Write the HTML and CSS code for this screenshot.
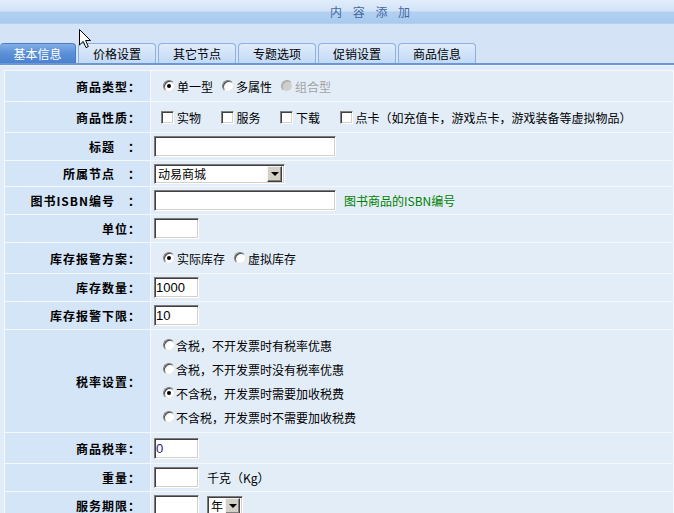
FILE: index.html
```html
<!DOCTYPE html>
<html>

<head>
	<title>内容添加</title>
	<link rel="stylesheet" href="styles.css">
</head>

<body>
	<div class="topbar">内 容 添 加</div>

	<div class="tabbar">
		<div class="tab active">基本信息</div>
		<div class="tab">价格设置</div>
		<div class="tab">其它节点</div>
		<div class="tab">专题选项</div>
		<div class="tab">促销设置</div>
		<div class="tab">商品信息</div>
	</div>

	<div class="content">
		<table class="form-table">
			<tr class="tall">
				<td class="label">商品类型：</td>
				<td class="value">
					<div class="field options">
						<span class="opt"><span class="radio checked"></span>单一型</span>
						<span class="opt"><span class="radio"></span>多属性</span>
						<span class="opt disabled"><span class="radio"></span>组合型</span>
					</div>
				</td>
			</tr>
			<tr class="tall">
				<td class="label">商品性质：</td>
				<td class="value">
					<div class="field checks">
						<span class="opt"><span class="checkbox"></span>实物</span>
						<span class="opt"><span class="checkbox"></span>服务</span>
						<span class="opt"><span class="checkbox"></span>下载</span>
						<span class="opt"><span class="checkbox"></span>点卡（如充值卡，游戏点卡，游戏装备等虚拟物品）</span>
					</div>
				</td>
			</tr>
			<tr class="field-row">
				<td class="label">标题　：</td>
				<td class="value">
					<div class="field"><input class="text-input wide" type="text"></div>
				</td>
			</tr>
			<tr class="short">
				<td class="label">所属节点　：</td>
				<td class="value">
					<div class="field">
						<div class="select node-select">
							<span class="select-text">动易商城</span>
							<span class="select-btn"></span>
						</div>
					</div>
				</td>
			</tr>
			<tr class="field-row">
				<td class="label">图书ISBN编号　：</td>
				<td class="value">
					<div class="field">
						<input class="text-input wide" type="text">
						<span class="hint">图书商品的ISBN编号</span>
					</div>
				</td>
			</tr>
			<tr class="field-row">
				<td class="label">单位：</td>
				<td class="value">
					<div class="field"><input class="text-input small" type="text"></div>
				</td>
			</tr>
			<tr class="tall">
				<td class="label">库存报警方案：</td>
				<td class="value">
					<div class="field options">
						<span class="opt"><span class="radio checked"></span>实际库存</span>
						<span class="opt"><span class="radio"></span>虚拟库存</span>
					</div>
				</td>
			</tr>
			<tr class="field-row">
				<td class="label">库存数量：</td>
				<td class="value">
					<div class="field"><input class="text-input small" type="text" value="1000"></div>
				</td>
			</tr>
			<tr class="field-row">
				<td class="label">库存报警下限：</td>
				<td class="value">
					<div class="field"><input class="text-input small" type="text" value="10"></div>
				</td>
			</tr>
			<tr class="tax">
				<td class="label">税率设置：</td>
				<td class="value">
					<div class="tax-list">
						<span class="opt"><span class="radio"></span>含税，不开发票时有税率优惠</span>
						<span class="opt"><span class="radio"></span>含税，不开发票时没有税率优惠</span>
						<span class="opt"><span class="radio checked"></span>不含税，开发票时需要加收税费</span>
						<span class="opt"><span class="radio"></span>不含税，开发票时不需要加收税费</span>
					</div>
				</td>
			</tr>
			<tr class="tall">
				<td class="label">商品税率：</td>
				<td class="value">
					<div class="field"><input class="text-input small rate" type="text" value="0"></div>
				</td>
			</tr>
			<tr class="field-row">
				<td class="label">重量：</td>
				<td class="value">
					<div class="field">
						<input class="text-input small" type="text">
						<span>千克（Kg）</span>
					</div>
				</td>
			</tr>
			<tr class="field-row">
				<td class="label">服务期限：</td>
				<td class="value">
					<div class="field">
						<input class="text-input small" type="text">
						<div class="select year-select">
							<span class="select-text">年</span>
							<span class="select-btn"></span>
						</div>
					</div>
				</td>
			</tr>
		</table>
	</div>

	<!-- mouse pointer seen in the capture -->
	<svg class="cursor" width="13" height="20" viewBox="0 0 13 20">
		<path d="M0.5 0.5 L0.5 16 L4.2 12.4 L7 18.6 L9.3 17.6 L6.6 11.5 L11.5 11.5 Z" fill="#fff" stroke="#000" stroke-width="1"/>
	</svg>
</body>

</html>
```

FILE: styles.css
```css
body {
	margin: 0;
	font-family: "Noto Sans CJK SC", sans-serif;
	font-size: 12px;
	color: #000;
	background-color: #e2ecf8;
	overflow: hidden;
}

.topbar {
	height: 24px;
	line-height: 24px;
	padding-left: 330px;
	background: linear-gradient(to bottom, #e1edfa 0, #d2e3f7 11px, #b3d0f0 12px, #a9caef 23px, #bcd6f2 24px);
	color: #46679f;
	letter-spacing: 4px;
}

.tabbar {
	display: flex;
	align-items: flex-end;
	gap: 2px;
	height: 39px;
	background-color: #d4e3f5;
	border-bottom: 2px solid #6b97d6;
}

.tab {
	box-sizing: border-box;
	width: 78px;
	height: 20px;
	line-height: 19px;
	text-align: center;
	border: 1px solid #8cb1e2;
	border-bottom: none;
	border-radius: 4px 4px 0 0;
	background: linear-gradient(to bottom, #dfecfb, #c3daf6);
}

.tab.active {
	width: 76px;
	color: #fff;
	border-color: #4b7dc6;
	border-left: none;
	background: linear-gradient(to bottom, #82b0e8, #5d91d8 45%, #4b82cf);
}

.content {
	padding: 4px 0 0 4px;
	border-top: 1px solid #edf3fb;
}

.form-table {
	width: 100%;
	border-spacing: 1px;
	background-color: #f4f8fd;
}

.form-table td {
	padding: 0;
	vertical-align: middle;
}

.label {
	width: 136px;
	padding-right: 9px !important;
	text-align: right;
	font-weight: bold;
	letter-spacing: 1px;
	background-color: #d4e5f8;
	white-space: nowrap;
}

.value {
	padding-left: 3px !important;
	background-color: #e3edf8;
}

.tall td {
	height: 30px;
}

.field-row td {
	height: 27px;
}

.short td {
	height: 25px;
}

.tax td {
	height: 102px;
}

.field {
	display: flex;
	align-items: center;
	gap: 8px;
}

.options .opt,
.checks .opt,
.tax-list .opt {
	display: inline-flex;
	align-items: center;
	gap: 2px;
}

.options {
	gap: 9px;
	padding-left: 9px;
}

.checks {
	gap: 19.5px;
	padding-left: 7px;
}

.checks .opt {
	gap: 3px;
}

.opt.disabled {
	color: #a3a3a3;
}

.radio {
	position: relative;
	box-sizing: border-box;
	width: 12px;
	height: 12px;
	border-radius: 50%;
	border: 1px solid;
	border-color: #7d7d7d #e6e6e6 #e6e6e6 #7d7d7d;
	background-color: #fff;
	box-shadow: inset 1px 1px 0 #4a4a4a;
}

.radio.checked::after {
	content: "";
	position: absolute;
	left: 3px;
	top: 3px;
	width: 4px;
	height: 4px;
	border-radius: 50%;
	background-color: #000;
}

.disabled .radio {
	background-color: #cfcfcf;
	border-color: #a8a8a8 #ececec #ececec #a8a8a8;
	box-shadow: inset 1px 1px 0 #b8b8b8;
}

.checkbox {
	box-sizing: border-box;
	width: 13px;
	height: 13px;
	border: 1px solid;
	border-color: #808080 #ffffff #ffffff #808080;
	background-color: #fff;
	box-shadow: inset 1px 1px 0 #404040, inset -1px -1px 0 #d4d0c8;
}

.text-input {
	box-sizing: border-box;
	height: 21px;
	margin: 0;
	padding: 0 1px;
	font-family: "Liberation Sans", Arial, sans-serif;
	font-size: 13px;
	color: #000;
	border: 1px solid;
	border-color: #7b7b7b #ffffff #ffffff #7b7b7b;
	box-shadow: inset 1px 1px 0 #404040, inset -1px -1px 0 #d4d0c8;
	background-color: #fff;
	outline: none;
}

.text-input.wide {
	width: 182px;
}

.text-input.small {
	width: 45px;
}

.text-input.rate {
	color: #1a1a8c;
}

.hint {
	color: #008000;
}

.select {
	box-sizing: border-box;
	display: inline-flex;
	align-items: center;
	height: 20px;
	border: 1px solid;
	border-color: #7b7b7b #ffffff #ffffff #7b7b7b;
	box-shadow: inset 1px 1px 0 #404040, inset -1px -1px 0 #d4d0c8;
	background-color: #fff;
}

.node-select {
	width: 131px;
}

.year-select {
	width: 36px;
}

.select-text {
	flex: 1;
	padding-left: 3px;
}

.select-btn {
	position: relative;
	box-sizing: border-box;
	width: 15px;
	height: 16px;
	margin-right: 2px;
	border: 1px solid;
	border-color: #f4f4f4 #404040 #404040 #f4f4f4;
	box-shadow: inset -1px -1px 0 #808080;
	background-color: #d4d0c8;
}

.select-btn::after {
	content: "";
	position: absolute;
	left: 3px;
	top: 5px;
	border-left: 4px solid transparent;
	border-right: 4px solid transparent;
	border-top: 4px solid #000;
}

.tax-list {
	display: flex;
	flex-direction: column;
	padding-left: 9px;
}

.tax-list .opt {
	height: 24px;
	gap: 1px;
}

.cursor {
	position: absolute;
	left: 79px;
	top: 29px;
}
```
